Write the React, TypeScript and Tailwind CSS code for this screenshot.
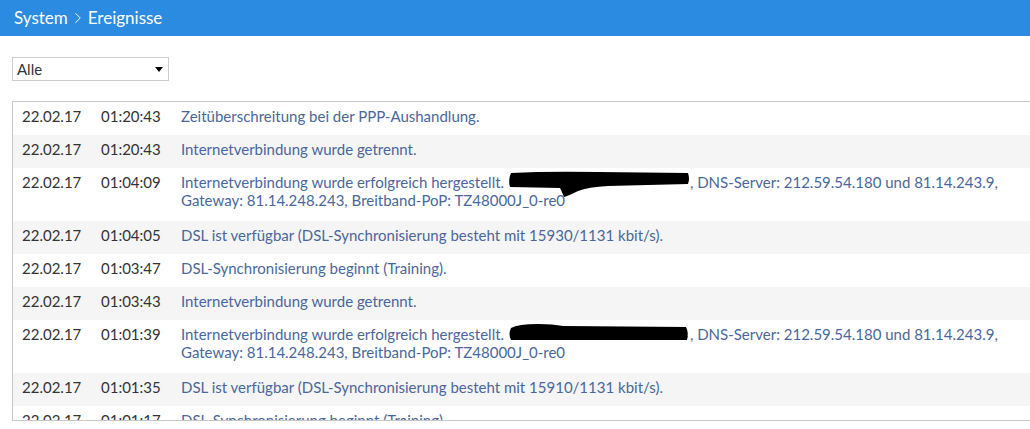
import React from "react";
import { ChevronRight } from "lucide-react";

type Row = { date: string; time: string; msg: React.ReactNode; tall?: boolean };

function Redact1() {
  return (
    <svg width="182" height="18" viewBox="0 0 182 18" overflow="visible" className="inline-block align-top overflow-visible">
      <path d="M3 0 Q40 -2 90 -1 L180 0 Q182 6 180 11 L100 13 Q80 14 70 18 Q60 23 56 24 Q54 19 52 15 L2 14 Q0 7 3 0 Z" fill="#000" />
    </svg>
  );
}

function Redact2() {
  return (
    <svg width="182" height="18" viewBox="0 0 182 18" overflow="visible" className="inline-block align-top overflow-visible">
      <path d="M3 3 Q10 -1 30 -1 Q45 -1 55 1 L178 2 Q181 8 179 15 L3 15 Q0 9 3 3 Z" fill="#000" />
    </svg>
  );
}

const rows: Row[] = [
  { date: "22.02.17", time: "01:20:43", msg: "Zeitüberschreitung bei der PPP-Aushandlung." },
  { date: "22.02.17", time: "01:20:43", msg: "Internetverbindung wurde getrennt." },
  {
    date: "22.02.17",
    time: "01:04:09",
    tall: true,
    msg: (
      <>
        Internetverbindung wurde erfolgreich hergestellt. <Redact1 />, DNS-Server: 212.59.54.180 und 81.14.243.9,
        <br />
        Gateway: 81.14.248.243, Breitband-PoP: TZ48000J_0-re0
      </>
    ),
  },
  { date: "22.02.17", time: "01:04:05", msg: "DSL ist verfügbar (DSL-Synchronisierung besteht mit 15930/1131 kbit/s)." },
  { date: "22.02.17", time: "01:03:47", msg: "DSL-Synchronisierung beginnt (Training)." },
  { date: "22.02.17", time: "01:03:43", msg: "Internetverbindung wurde getrennt." },
  {
    date: "22.02.17",
    time: "01:01:39",
    tall: true,
    msg: (
      <>
        Internetverbindung wurde erfolgreich hergestellt. <Redact2 />, DNS-Server: 212.59.54.180 und 81.14.243.9,
        <br />
        Gateway: 81.14.248.243, Breitband-PoP: TZ48000J_0-re0
      </>
    ),
  },
  { date: "22.02.17", time: "01:01:35", msg: "DSL ist verfügbar (DSL-Synchronisierung besteht mit 15910/1131 kbit/s)." },
  { date: "22.02.17", time: "01:01:17", msg: "DSL-Synchronisierung beginnt (Training)." },
];

export default function App() {
  return (
    <div className="w-[1030px] h-[429px] overflow-hidden bg-white" style={{ fontFamily: "Lato, 'Noto Sans', sans-serif" }}>
      <div className="h-[36px] bg-[#2a8be0] flex items-center pl-[14px] text-white text-[17px]">
        <span>System</span>
        <ChevronRight className="w-[18px] h-[18px] mx-[1px]" strokeWidth={1.3} />
        <span>Ereignisse</span>
      </div>

      <div className="pl-[12px] pt-[21px]">
        <div className="w-[157px] h-[24px] border border-[#cccccc] flex items-center justify-between pl-[4px] pr-[5px] text-[15px] text-[#333]">
          <span>Alle</span>
          <svg width="8" height="5" viewBox="0 0 8 5">
            <path d="M0 0 L8 0 L4 5 Z" fill="#000" />
          </svg>
        </div>
      </div>

      <div className="ml-[12px] mt-[20px] w-[1040px] h-[320px] border border-[#c8c8c8] overflow-hidden text-[15px] leading-[18px]">
        {rows.map((r, i) => (
          <div
            key={i}
            className={`flex pl-[9px] pt-[5px] ${r.tall ? "h-[53px]" : "h-[33px]"} ${i % 2 === 1 ? "bg-[#f5f5f5]" : "bg-white"}`}
          >
            <div className="w-[79px] shrink-0 text-[#333]">{r.date}</div>
            <div className="w-[80px] shrink-0 text-[#333]">{r.time}</div>
            <div className="flex-1 text-[#4a679b] whitespace-nowrap">{r.msg}</div>
          </div>
        ))}
      </div>
    </div>
  );
}
